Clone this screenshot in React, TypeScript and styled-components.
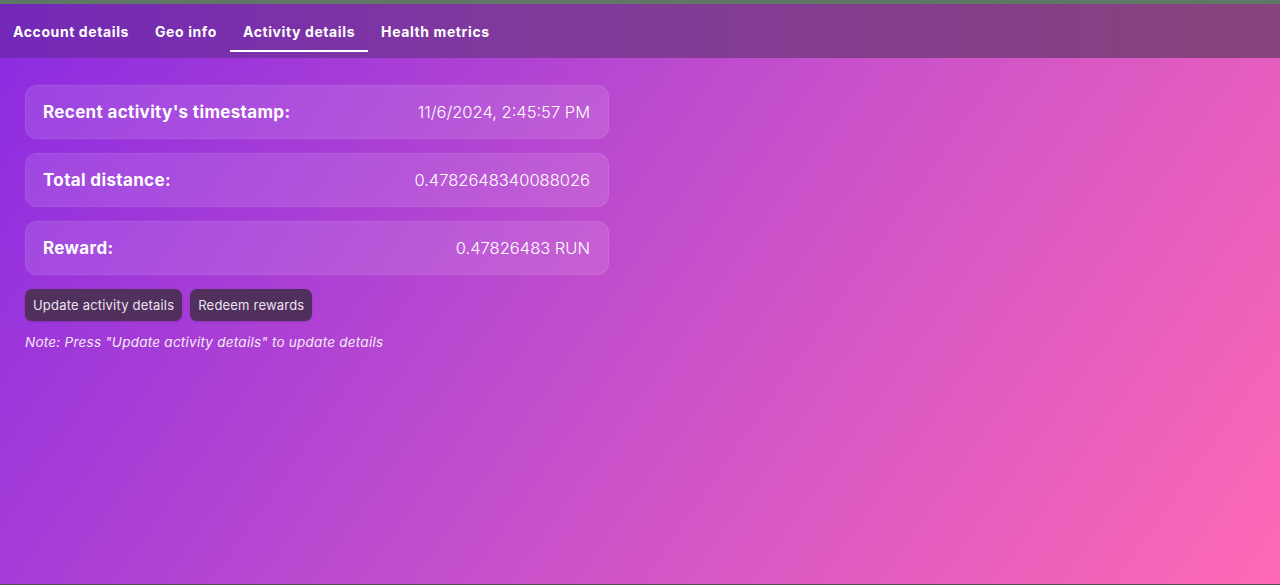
import React from "react";
import styled, { createGlobalStyle } from "styled-components";

const Global = createGlobalStyle`
  html, body { margin: 0; padding: 0; }
  body { font-family: Inter, "DejaVu Sans", sans-serif; }
  * { box-sizing: border-box; }
`;

const Page = styled.div`
  width: 1280px;
  height: 585px;
  display: flex;
  flex-direction: column;
  background: linear-gradient(125deg, #8a2be2 0%, #c44fcc 50%, #ff69b4 100%);
  border-bottom: 1px solid #5a4a5a;
  overflow: hidden;
`;

const TopStrip = styled.div`
  height: 4px;
  background: #5f7866;
  flex: none;
`;

const Header = styled.nav`
  height: 54px;
  flex: none;
  display: flex;
  align-items: flex-start;
  background: linear-gradient(90deg, #7428b8 0%, #80399c 40%, #88437c 100%);
`;

const Tab = styled.div<{ $active?: boolean }>`
  height: 48px;
  display: flex;
  align-items: center;
  padding: 8px 13px 0;
  color: #ffffff;
  font-size: 14px;
  font-weight: 700;
  letter-spacing: 0.6px;
  border-bottom: 2px solid ${(p) => (p.$active ? "#ffffff" : "transparent")};
`;

const Content = styled.main`
  padding: 27px 25px;
  display: flex;
  flex-direction: column;
  width: 634px;
`;

const Cards = styled.div`
  display: flex;
  flex-direction: column;
  gap: 14px;
`;

const Card = styled.div`
  height: 54px;
  display: flex;
  align-items: center;
  justify-content: space-between;
  padding: 0 18px 0 17px;
  border-radius: 12px;
  background: rgba(255, 255, 255, 0.11);
  border: 1px solid rgba(255, 255, 255, 0.08);
  color: #ffffff;
`;

const Label = styled.span`
  font-size: 17px;
  font-weight: 700;
  letter-spacing: 0.35px;
`;

const Value = styled.span`
  font-size: 16.5px;
  font-weight: 300;
`;

const Actions = styled.div`
  display: flex;
  gap: 8px;
  margin-top: 14px;
`;

const Button = styled.button`
  height: 32px;
  padding: 0 8px;
  border: none;
  border-radius: 7px;
  background: #51305e;
  color: #ece4f0;
  font-family: Inter, "DejaVu Sans", sans-serif;
  font-size: 13px;
  font-weight: 400;
  letter-spacing: 0.2px;
  box-shadow: 0 1px 2px rgba(0, 0, 0, 0.15);
`;

const Note = styled.p`
  margin: 13px 0 0;
  color: #f4eaf6;
  font-size: 13.5px;
  font-style: italic;
  font-weight: 400;
  letter-spacing: 0.25px;
`;

const rows = [
  { label: "Recent activity's timestamp:", value: "11/6/2024, 2:45:57 PM" },
  { label: "Total distance:", value: "0.4782648340088026" },
  { label: "Reward:", value: "0.47826483 RUN" },
];

const tabs = ["Account details", "Geo info", "Activity details", "Health metrics"];

export default function App() {
  return (
    <>
      <Global />
      <Page>
        <TopStrip />
        <Header>
          {tabs.map((t) => (
            <Tab key={t} $active={t === "Activity details"}>
              {t}
            </Tab>
          ))}
        </Header>
        <Content>
          <Cards>
            {rows.map((r) => (
              <Card key={r.label}>
                <Label>{r.label}</Label>
                <Value>{r.value}</Value>
              </Card>
            ))}
          </Cards>
          <Actions>
            <Button>Update activity details</Button>
            <Button>Redeem rewards</Button>
          </Actions>
          <Note>Note: Press "Update activity details" to update details</Note>
        </Content>
      </Page>
    </>
  );
}
